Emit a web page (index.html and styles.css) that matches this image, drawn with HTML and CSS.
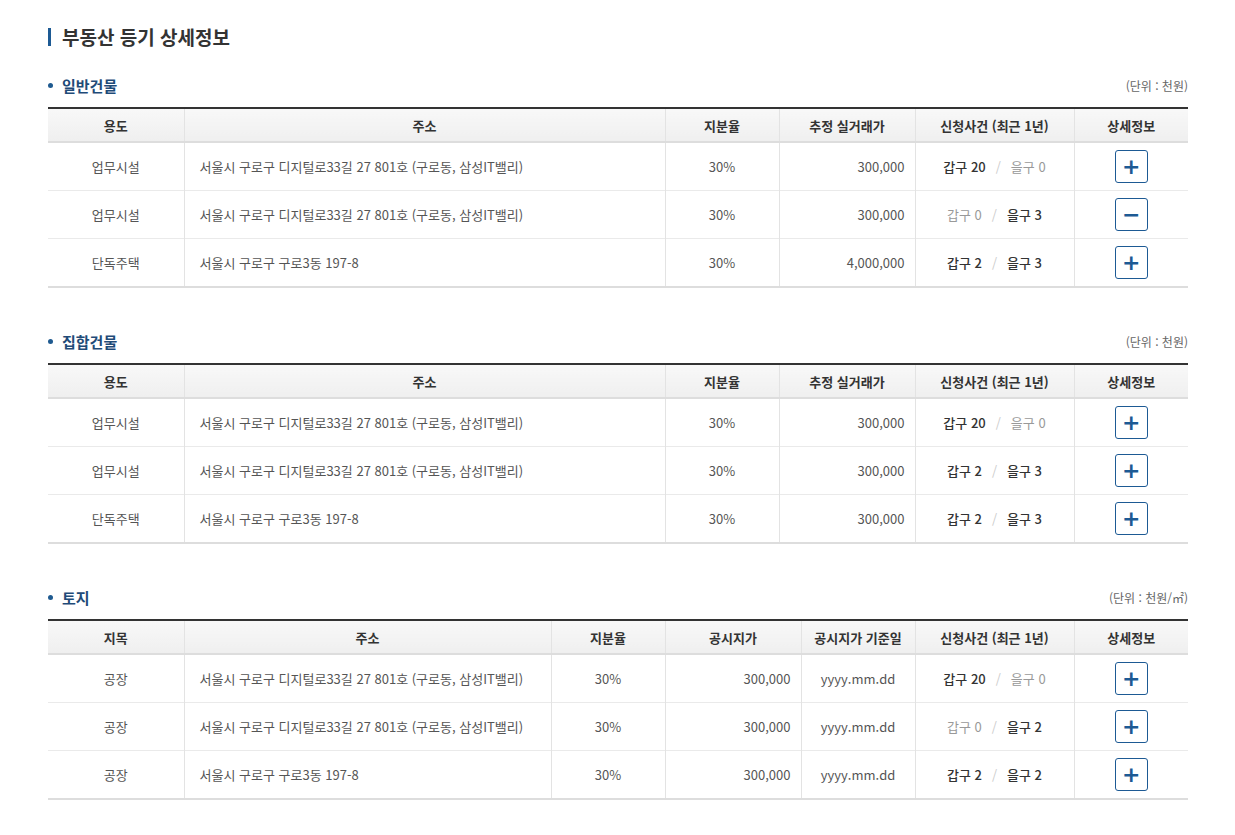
FILE: index.html
```html
<!DOCTYPE html>
<html lang="ko">
<head>
  <meta charset="UTF-8" />
  <title>부동산 등기 상세정보</title>
  <link rel="stylesheet" href="styles.css">
</head>
<body>
  <div class="wrapper">
    <h1 class="page-title">부동산 등기 상세정보</h1>

    <div class="section">
      <div class="section-head">
        <h2>일반건물</h2>
        <span class="unit">(단위 : 천원)</span>
      </div>
      <table class="grid">
        <colgroup>
          <col style="width:136px"><col><col style="width:114px"><col style="width:136px"><col style="width:159px"><col style="width:114px">
        </colgroup>
        <thead>
          <tr><th>용도</th><th>주소</th><th>지분율</th><th>추정 실거래가</th><th>신청사건 (최근 1년)</th><th>상세정보</th></tr>
        </thead>
        <tbody>
          <tr>
            <td>업무시설</td>
            <td class="left">서울시 구로구 디지털로33길 27 801호 (구로동, 삼성IT밸리)</td>
            <td>30%</td>
            <td class="right">300,000</td>
            <td><b>갑구 20</b><i>/</i><span class="dim">을구 0</span></td>
            <td><button class="toggle">+</button></td>
          </tr>
          <tr>
            <td>업무시설</td>
            <td class="left">서울시 구로구 디지털로33길 27 801호 (구로동, 삼성IT밸리)</td>
            <td>30%</td>
            <td class="right">300,000</td>
            <td><span class="dim">갑구 0</span><i>/</i><b>을구 3</b></td>
            <td><button class="toggle">−</button></td>
          </tr>
          <tr>
            <td>단독주택</td>
            <td class="left">서울시 구로구 구로3동 197-8</td>
            <td>30%</td>
            <td class="right">4,000,000</td>
            <td><b>갑구 2</b><i>/</i><b>을구 3</b></td>
            <td><button class="toggle">+</button></td>
          </tr>
        </tbody>
      </table>
    </div>

    <div class="section">
      <div class="section-head">
        <h2>집합건물</h2>
        <span class="unit">(단위 : 천원)</span>
      </div>
      <table class="grid">
        <colgroup>
          <col style="width:136px"><col><col style="width:114px"><col style="width:136px"><col style="width:159px"><col style="width:114px">
        </colgroup>
        <thead>
          <tr><th>용도</th><th>주소</th><th>지분율</th><th>추정 실거래가</th><th>신청사건 (최근 1년)</th><th>상세정보</th></tr>
        </thead>
        <tbody>
          <tr>
            <td>업무시설</td>
            <td class="left">서울시 구로구 디지털로33길 27 801호 (구로동, 삼성IT밸리)</td>
            <td>30%</td>
            <td class="right">300,000</td>
            <td><b>갑구 20</b><i>/</i><span class="dim">을구 0</span></td>
            <td><button class="toggle">+</button></td>
          </tr>
          <tr>
            <td>업무시설</td>
            <td class="left">서울시 구로구 디지털로33길 27 801호 (구로동, 삼성IT밸리)</td>
            <td>30%</td>
            <td class="right">300,000</td>
            <td><b>갑구 2</b><i>/</i><b>을구 3</b></td>
            <td><button class="toggle">+</button></td>
          </tr>
          <tr>
            <td>단독주택</td>
            <td class="left">서울시 구로구 구로3동 197-8</td>
            <td>30%</td>
            <td class="right">300,000</td>
            <td><b>갑구 2</b><i>/</i><b>을구 3</b></td>
            <td><button class="toggle">+</button></td>
          </tr>
        </tbody>
      </table>
    </div>

    <div class="section">
      <div class="section-head">
        <h2>토지</h2>
        <span class="unit">(단위 : 천원/㎡)</span>
      </div>
      <table class="grid">
        <colgroup>
          <col style="width:136px"><col><col style="width:114px"><col style="width:136px"><col style="width:114px"><col style="width:159px"><col style="width:114px">
        </colgroup>
        <thead>
          <tr><th>지목</th><th>주소</th><th>지분율</th><th>공시지가</th><th>공시지가 기준일</th><th>신청사건 (최근 1년)</th><th>상세정보</th></tr>
        </thead>
        <tbody>
          <tr>
            <td>공장</td>
            <td class="left">서울시 구로구 디지털로33길 27 801호 (구로동, 삼성IT밸리)</td>
            <td>30%</td>
            <td class="right">300,000</td>
            <td>yyyy.mm.dd</td>
            <td><b>갑구 20</b><i>/</i><span class="dim">을구 0</span></td>
            <td><button class="toggle">+</button></td>
          </tr>
          <tr>
            <td>공장</td>
            <td class="left">서울시 구로구 디지털로33길 27 801호 (구로동, 삼성IT밸리)</td>
            <td>30%</td>
            <td class="right">300,000</td>
            <td>yyyy.mm.dd</td>
            <td><span class="dim">갑구 0</span><i>/</i><b>을구 2</b></td>
            <td><button class="toggle">+</button></td>
          </tr>
          <tr>
            <td>공장</td>
            <td class="left">서울시 구로구 구로3동 197-8</td>
            <td>30%</td>
            <td class="right">300,000</td>
            <td>yyyy.mm.dd</td>
            <td><b>갑구 2</b><i>/</i><b>을구 2</b></td>
            <td><button class="toggle">+</button></td>
          </tr>
        </tbody>
      </table>
    </div>
  </div>
</body>
</html>
```

FILE: styles.css
```css
body {
  margin: 0;
  background: #fff;
  color: #555;
  font-family: "Noto Sans CJK KR", "Noto Sans", sans-serif;
  font-size: 13px;
}

.wrapper {
  width: 1140px;
  margin-left: 48px;
  padding-top: 28px;
}

.page-title {
  margin: 0;
  padding-left: 11px;
  border-left: 3px solid #1d5a94;
  font-size: 19px;
  line-height: 18px;
  font-weight: bold;
  color: #333;
}

.section {
  margin-top: 27px;
}

.section + .section {
  margin-top: 41px;
}

.section-head {
  display: flex;
  justify-content: space-between;
  align-items: center;
  height: 24px;
  margin-bottom: 10px;
}

.section-head h2 {
  margin: 0;
  padding-left: 14px;
  position: relative;
  font-size: 15px;
  font-weight: bold;
  color: #1f4b78;
}

.section-head h2::before {
  content: "";
  position: absolute;
  left: 0;
  top: 50%;
  width: 5px;
  height: 5px;
  margin-top: -2px;
  border-radius: 50%;
  background: #1f5a90;
}

.unit {
  font-size: 12px;
  color: #666;
}

.grid {
  width: 100%;
  border-collapse: collapse;
  table-layout: fixed;
  border-top: 2px solid #333;
  border-bottom: 2px solid #ddd;
}

.grid th {
  height: 32px;
  padding: 0;
  background: linear-gradient(#f8f8f8, #efefef);
  border-bottom: 2px solid #ddd;
  border-left: 1px solid #e3e3e3;
  color: #333;
  font-weight: bold;
  font-size: 13px;
}

.grid td {
  height: 47px;
  padding: 0;
  text-align: center;
  border-top: 1px solid #eaeaea;
  border-left: 1px solid #e3e3e3;
}

.grid tbody tr:first-child td {
  border-top: none;
}

.grid th:first-child,
.grid td:first-child {
  border-left: none;
}

.grid td.left {
  text-align: left;
  padding-left: 15px;
}

.grid td.right {
  text-align: right;
  padding-right: 10px;
}

.grid b {
  color: #333;
  font-weight: 500;
}

.grid i {
  font-style: normal;
  color: #ccc;
  margin: 0 10px;
}

.grid .dim {
  color: #999;
}

.toggle {
  width: 33px;
  height: 33px;
  padding: 0;
  border: 1px solid #1d5a94;
  border-radius: 3px;
  background: #fff;
  color: #1d5a94;
  font-family: "DejaVu Sans", sans-serif;
  font-size: 22px;
  line-height: 30px;
  font-weight: bold;
  cursor: pointer;
}
```
